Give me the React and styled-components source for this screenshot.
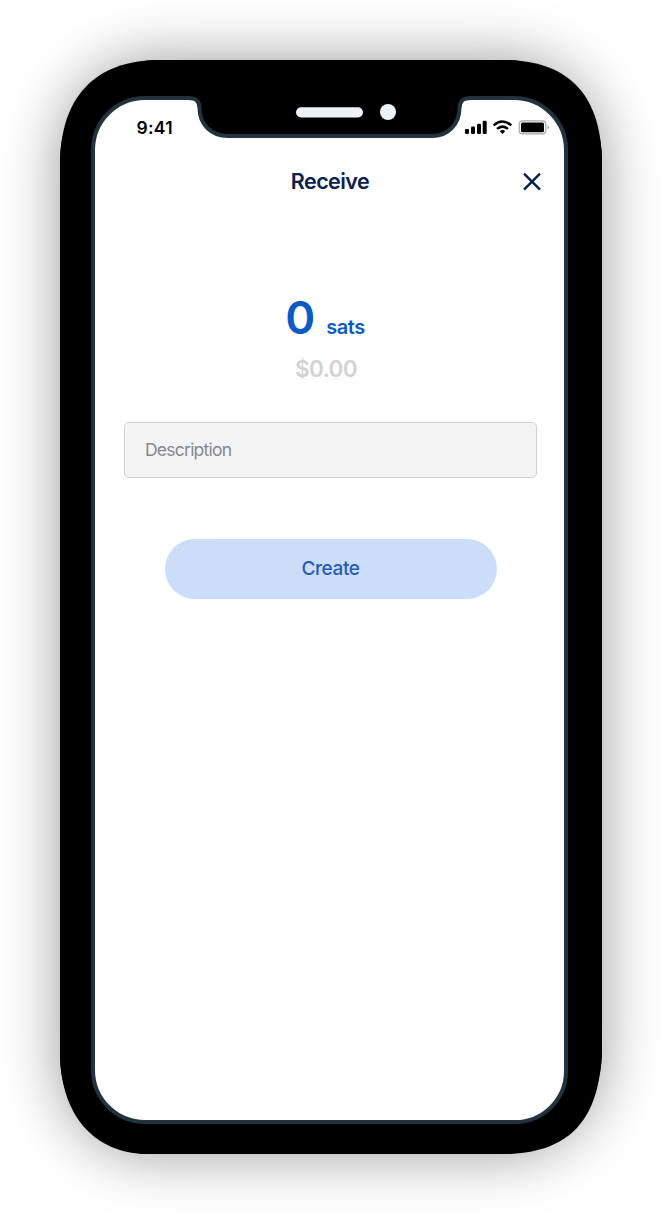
import React from "react";
import styled, { createGlobalStyle } from "styled-components";

const GlobalStyle = createGlobalStyle`
  *, *::before, *::after { box-sizing: border-box; }
  html, body { margin: 0; background: #fff; }
  body { font-family: Inter, "Liberation Sans", sans-serif; overflow: hidden; }
  button, input { font: inherit; }
`;

const Stage = styled.main`
  width: 662px;
  height: 1214px;
  padding: 60px;
  background: #fff;
`;

const Device = styled.section`
  position: relative;
  width: 542px;
  height: 1094px;
  padding: 36px 34px 30px 31px;
  border-radius: 97px 97px 97px 88px / 100px 100px 102px 98px;
  background: #000;
  box-shadow: 0 0 60px rgba(0, 0, 0, 0.4);

  /* Continuous-curvature corners of the handset body */
  &::before {
    content: "";
    position: absolute;
    inset: 0;
    background: #000;
    clip-path: path("M100 0H442C508 0 542 34 542 105V982C542 1060 510 1094 442 1094H88C34 1094 0 1055 0 992V105C0 38 34 0 100 0Z");
  }
`;

const Screen = styled.div`
  position: relative;
  width: 477px;
  height: 1028px;
  display: flex;
  flex-direction: column;
  border: 4px solid #22333d;
  border-radius: 54px 54px 53px 54px;
  background: #fff;
`;

const Notch = styled.svg`
  position: absolute;
  left: 125px;
  top: 33px;
`;

const StatusBar = styled.div`
  height: 55px;
  padding: 20px 14px 0 41.5px;
  display: flex;
  justify-content: space-between;
  align-items: flex-start;
`;

const Clock = styled.span`
  margin-top: -0.6px;
  font-size: 17.5px;
  line-height: 17px;
  font-weight: 600;
  letter-spacing: 0.3px;
  color: #000;
`;

const StatusIcons = styled.svg`
  display: block;
`;

const Header = styled.header`
  height: 54px;
  display: grid;
  grid-template-columns: 1fr auto 1fr;
  align-items: center;
  padding: 0 22px 0 22px;
`;

const Title = styled.h1`
  grid-column: 2;
  margin: -2px 0 0 1px;
  font-size: 21.5px;
  line-height: 28px;
  font-weight: 600;
  letter-spacing: -0.55px;
  color: #092050;
`;

const CloseButton = styled.button`
  justify-self: end;
  display: flex;
  padding: 0;
  border: 0;
  background: none;
  color: #092050;
`;

const Amount = styled.div`
  margin-top: 78px;
  height: 60px;
  display: flex;
  justify-content: center;
  align-items: baseline;
  gap: 11px;
  padding-right: 9px;
  color: #0c5bc4;
  font-weight: 600;
`;

const AmountValue = styled.span`
  font-size: 45.5px;
  line-height: 61px;
`;

const AmountUnit = styled.span`
  font-size: 20px;
  letter-spacing: -0.5px;
`;

const Fiat = styled.div`
  height: 30px;
  margin-top: 7px;
  padding-right: 7px;
  text-align: center;
  font-size: 22.5px;
  line-height: 30px;
  font-weight: 600;
  letter-spacing: -0.65px;
  color: #d2d2d2;
`;

const Description = styled.input`
  width: 413px;
  height: 56px;
  margin: 38px 0 0 29px;
  padding: 0 20px 1px;
  border: 1px solid #d0d0d0;
  border-radius: 5px;
  background: #f4f4f4;
  font-size: 17.5px;
  letter-spacing: -0.76px;
  outline: none;
  &::placeholder { color: #85888e; opacity: 1; }
`;

const CreateButton = styled.button`
  width: 332px;
  height: 60.5px;
  margin: 60.8px 0 0 70px;
  padding: 0 1px 1px 0;
  border: 0;
  border-radius: 31px;
  background: #ccddf9;
  color: #285bb5;
  font-size: 19px;
  font-weight: 500;
  letter-spacing: -0.4px;
`;

export default function App() {
  return (
    <>
      <GlobalStyle />
      <Stage>
        <Device>
          <Screen>
            <StatusBar>
              <Clock>9:41</Clock>
              <StatusIcons width="86" height="16" viewBox="0 0 86 16">
                <rect x="1" y="9" width="4" height="5" rx="1.2" />
                <rect x="7" y="6.5" width="4" height="7.5" rx="1.2" />
                <rect x="13" y="3.7" width="4" height="10.3" rx="1.2" />
                <rect x="18.7" y="0.7" width="4" height="13.3" rx="1.2" />
                <g fill="none" stroke="#000" strokeWidth="2.5">
                  <path d="M29.7 5.4Q38.5-2.3 47.3 5.4" />
                  <path d="M33 8.9Q38.5 4.3 44 8.9" />
                </g>
                <path d="M35.8 11.2Q38.5 9 41.2 11.2L38.5 13.9Z" />
                <rect x="55.2" y="0.9" width="26.6" height="13" rx="3.3" fill="none" stroke="#a6a6a6" strokeWidth="1.2" />
                <rect x="57" y="2.6" width="23" height="9.6" rx="1.5" />
                <path d="M83.5 5.2Q86.5 7.4 83.5 9.6Z" fill="#a6a6a6" />
              </StatusIcons>
            </StatusBar>
            <Header>
              <Title>Receive</Title>
              <CloseButton aria-label="Close">
                <svg width="20" height="20" viewBox="0 0 20 20" fill="none" stroke="currentColor" strokeWidth="2.4">
                  <path d="M2 1.7L18 17.7M18 1.7L2 17.7" />
                </svg>
              </CloseButton>
            </Header>
            <Amount>
              <AmountValue>0</AmountValue>
              <AmountUnit>sats</AmountUnit>
            </Amount>
            <Fiat>$0.00</Fiat>
            <Description placeholder="Description" />
            <CreateButton>Create</CreateButton>
          </Screen>
          <Notch width="290" height="48" viewBox="185 93 290 48">
            <path
              d="M188 98C196 98 199.5 101 199.5 108C199.5 124 211 136 228 136H432C448 136 459.5 124 459.5 108C459.5 101 463 98 471 98V93H188Z"
              fill="#000"
            />
            <path
              d="M188 98C196 98 199.5 101 199.5 108C199.5 124 211 136 228 136H432C448 136 459.5 124 459.5 108C459.5 101 463 98 471 98"
              fill="none"
              stroke="#22333d"
              strokeWidth="4"
            />
            <rect x="296" y="107.2" width="67" height="10.2" rx="5.1" fill="#eef2f6" />
            <circle cx="388" cy="112" r="8" fill="#eef2f6" />
          </Notch>
        </Device>
      </Stage>
    </>
  );
}
